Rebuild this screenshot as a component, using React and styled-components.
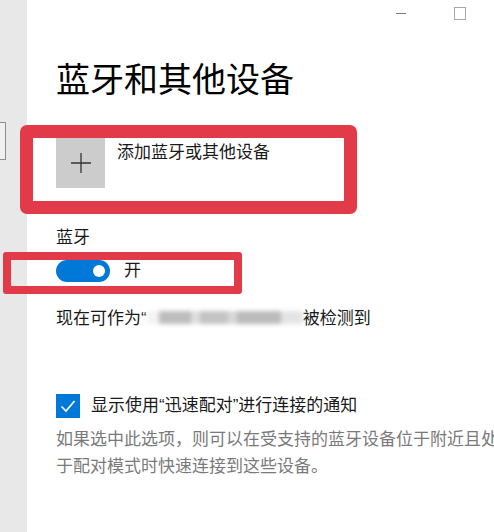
import React from 'react'
import styled, { createGlobalStyle } from 'styled-components'

const GlobalStyle = createGlobalStyle`
    html, body {
        margin: 0;
        padding: 0;
        background: #fff;
        overflow: hidden;
    }
    body {
        font-family: "Liberation Sans", "Noto Sans CJK SC", sans-serif;
        color: #1a1a1a;
    }
`;

const Window = styled.div`
    display: flex;
    width: 494px;
    height: 532px;
    overflow: hidden;
`;

const Sidebar = styled.div`
    width: 27px;
    flex-shrink: 0;
    background: #e8e8e8;
    display: flex;
    flex-direction: column;
`;

const NavStub = styled.div`
    margin-top: 122px;
    width: 5px;
    height: 36px;
    border: 1.5px solid #8e8e8e;
    border-left: none;
    background: #f0f0f0;
`;

const Main = styled.div`
    flex: 1;
    display: flex;
    flex-direction: column;
    padding-left: 29px;
    min-width: 0;
`;

const TitleBar = styled.div`
    display: flex;
    justify-content: flex-end;
    align-items: center;
    gap: 48px;
    height: 26px;
    padding-right: 28px;
`;

const Minimize = styled.span`
    width: 10px;
    height: 1px;
    background: #7a7a7a;
`;

const Maximize = styled.span`
    width: 10px;
    height: 11px;
    border: 1px solid #a8a8a8;
`;

const Title = styled.h1`
    margin: 34px 0 0;
    font-size: 34px;
    line-height: 40px;
    font-weight: 400;
    color: #000;
`;

const Row = styled.div`
    position: relative;
    display: flex;
    align-items: ${p => p.$align || 'center'};
    gap: ${p => p.$gap || 12}px;
    margin-top: ${p => p.$top || 0}px;
`;

const Highlight = styled.div`
    position: absolute;
    top: ${p => p.$top}px;
    left: ${p => p.$left}px;
    width: ${p => p.$width}px;
    height: ${p => p.$height}px;
    border: ${p => p.$border}px solid #e33a4a;
    border-radius: ${p => p.$radius}px;
    box-sizing: border-box;
    pointer-events: none;
    z-index: 2;
`;

const AddButton = styled.div`
    width: 49px;
    height: 50px;
    background: #cccccc;
    display: flex;
    align-items: center;
    justify-content: center;
    flex-shrink: 0;
`;

const Text = styled.span`
    font-size: 17px;
    line-height: 24px;
    color: #1a1a1a;
`;

const AddLabel = styled(Text)`
    margin-top: 3px;
`;

const SectionLabel = styled.div`
    margin-top: 38px;
    font-size: 17px;
    line-height: 24px;
`;

const Toggle = styled.div`
    width: 54px;
    height: 22px;
    border-radius: 11px;
    background: #0078d7;
    display: flex;
    align-items: center;
    justify-content: flex-end;
    padding-right: 5px;
    box-sizing: border-box;
    flex-shrink: 0;
`;

const Knob = styled.span`
    width: 12px;
    height: 12px;
    border-radius: 50%;
    background: #fff;
`;

const Status = styled.div`
    margin-top: 24px;
    font-size: 17px;
    line-height: 24px;
    white-space: nowrap;
    display: flex;
    align-items: center;
`;

const Redacted = styled.span`
    display: inline-block;
    width: 156px;
    height: 24px;
    background:
        linear-gradient(90deg,
            #f4f4f4 0 8%, #bdbdbd 8% 28%, #dedede 28% 34%,
            #c3c3c3 34% 52%, #d8d8d8 52% 58%, #bbbbbb 58% 86%, #e4e4e4 86% 100%);
    background-size: 100% 13px;
    background-repeat: no-repeat;
    background-position: 0 4px;
    filter: blur(2px);
`;

const Checkbox = styled.div`
    width: 24px;
    height: 24px;
    background: #0078d7;
    display: flex;
    align-items: center;
    justify-content: center;
    flex-shrink: 0;
`;

const Description = styled.p`
    margin: 8px 0 0;
    width: 448px;
    font-size: 17px;
    line-height: 27px;
    color: #7a7a7a;
`;

export default function App() {
    return (
        <Window>
            <GlobalStyle />
            <Sidebar>
                <NavStub />
            </Sidebar>
            <Main>
                <TitleBar>
                    <Minimize />
                    <Maximize />
                </TitleBar>
                <Title>蓝牙和其他设备</Title>

                <Row $align="flex-start" $top={38}>
                    <AddButton>
                        <svg width="22" height="22" viewBox="0 0 22 22">
                            <path d="M11 1v20M1 11h20" stroke="#333" strokeWidth="1.3" fill="none" />
                        </svg>
                    </AddButton>
                    <AddLabel>添加蓝牙或其他设备</AddLabel>
                    <Highlight $top={-13} $left={-36} $width={337} $height={89} $border={13} $radius={7} />
                </Row>

                <SectionLabel>蓝牙</SectionLabel>

                <Row $gap={14} $top={9}>
                    <Toggle><Knob /></Toggle>
                    <Text>开</Text>
                    <Highlight $top={-7} $left={-53} $width={239} $height={42} $border={8} $radius={3} />
                </Row>

                <Status>
                    现在可作为“<Redacted />被检测到
                </Status>

                <Row $gap={11} $top={63}>
                    <Checkbox>
                        <svg width="18" height="18" viewBox="0 0 18 18">
                            <path d="M2.5 9.5l4.5 4.5 8.5-10" stroke="#fff" strokeWidth="1.6" fill="none" />
                        </svg>
                    </Checkbox>
                    <Text>显示使用“迅速配对”进行连接的通知</Text>
                </Row>

                <Description>
                    如果选中此选项，则可以在受支持的蓝牙设备位于附近且处于配对模式时快速连接到这些设备。
                </Description>
            </Main>
        </Window>
    )
}
